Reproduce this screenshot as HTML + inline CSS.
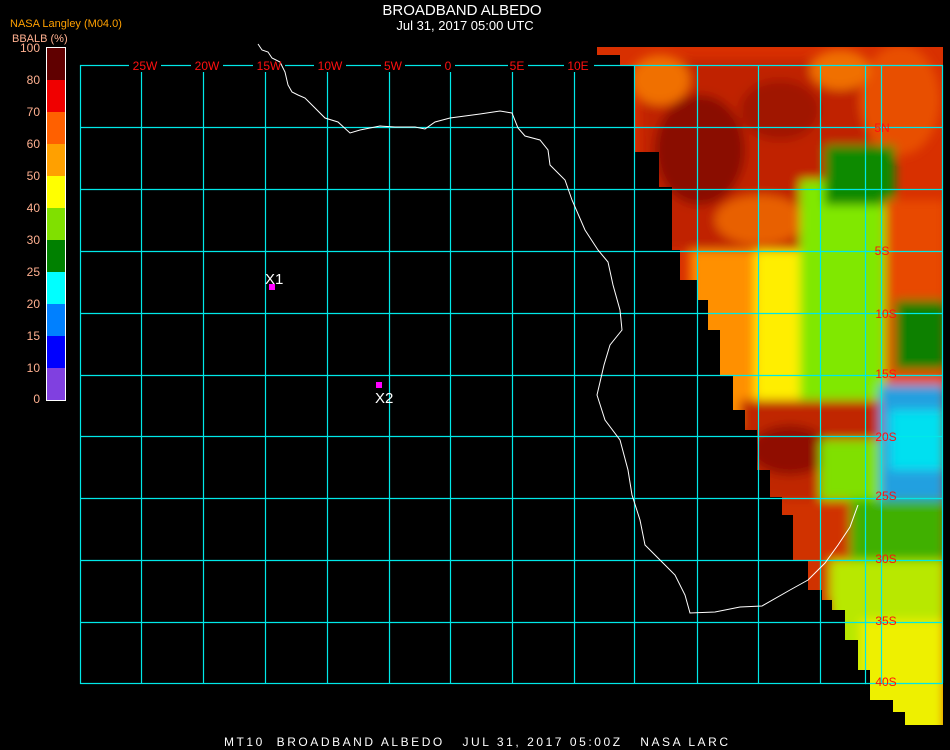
<!DOCTYPE html>
<html><head><meta charset="utf-8"><style>
html,body{margin:0;padding:0;background:#000;width:950px;height:750px;overflow:hidden}
svg{display:block}
text{font-family:"Liberation Sans",sans-serif;white-space:pre}
</style></head><body>
<svg width="950" height="750" viewBox="0 0 950 750">
<defs>
<clipPath id="dc"><polygon points="597,47 943,47 943,725 905,725 905,712 893,712 893,700 870,700 870,670 858,670 858,640 845,640 845,610 832,610 832,600 822,600 822,590 808,590 808,560 793,560 793,515 782,515 782,497 770,497 770,470 757,470 757,430 745,430 745,410 733,410 733,375 720,375 720,330 708,330 708,300 697,300 697,280 680,280 680,250 672,250 672,187 659,187 659,152 635,152 635,65 620,65 620,55 597,55"/></clipPath>
<filter id="bl"><feGaussianBlur stdDeviation="5"/></filter>
</defs>
<rect width="950" height="750" fill="#000"/>
<g clip-path="url(#dc)">
<rect x="590" y="40" width="360" height="710" fill="#d83000"/>
<g filter="url(#bl)">
<rect x="640" y="60" width="230" height="190" fill="#c02000"/>
<ellipse cx="700" cy="150" rx="45" ry="55" fill="#8a1000"/>
<ellipse cx="660" cy="80" rx="30" ry="25" fill="#f07000"/>
<ellipse cx="780" cy="110" rx="40" ry="30" fill="#a01800"/>
<ellipse cx="760" cy="220" rx="45" ry="25" fill="#e86000"/>
<ellipse cx="900" cy="100" rx="40" ry="55" fill="#e85000"/>
<ellipse cx="840" cy="70" rx="30" ry="20" fill="#f07000"/>
<rect x="690" y="250" width="70" height="180" fill="#ff9000"/>
<rect x="755" y="250" width="60" height="160" fill="#ffee00"/>
<rect x="800" y="180" width="85" height="230" fill="#80e800"/>
<rect x="825" y="145" width="70" height="60" fill="#108a00"/>
<rect x="885" y="200" width="60" height="200" fill="#e84a00"/>
<rect x="895" y="300" width="50" height="70" fill="#108000"/>
<rect x="740" y="400" width="140" height="100" fill="#c02800"/>
<ellipse cx="790" cy="450" rx="40" ry="25" fill="#901000"/>
<rect x="820" y="440" width="60" height="60" fill="#80e000"/>
<rect x="880" y="385" width="65" height="120" fill="#20a0e0"/>
<rect x="890" y="410" width="55" height="60" fill="#00e0f0"/>
<rect x="780" y="500" width="80" height="100" fill="#d03000"/>
<rect x="850" y="500" width="95" height="60" fill="#40b000"/>
<rect x="830" y="560" width="115" height="180" fill="#b8e800"/>
<rect x="860" y="620" width="85" height="120" fill="#eef000"/>
</g>
</g>
<g stroke="#00e8e8" stroke-width="1.2" fill="none">
<rect x="80.5" y="65.5" width="785" height="618"/>
<path d="M141.5 65V683M203.5 65V683M265.5 65V683M327.5 65V683M389.5 65V683M450.5 65V683M512.5 65V683M574.5 65V683M634.5 65V683M697.5 65V683M758.5 65V683M820.5 65V683M881.5 65V683"/>
<path d="M80 127.5H943M80 189.5H943M80 251.5H943M80 313.5H943M80 375.5H943M80 436.5H943M80 498.5H943M80 560.5H943M80 622.5H943M865 65.5H943M865 683.5H943M942.5 65V683"/>
</g>
<g fill="#000">
<rect x="129" y="60" width="32" height="12"/><rect x="191" y="60" width="32" height="12"/><rect x="253" y="60" width="32" height="12"/><rect x="314" y="60" width="32" height="12"/><rect x="381" y="60" width="24" height="12"/><rect x="441" y="60" width="14" height="12"/><rect x="508" y="60" width="20" height="12"/><rect x="564" y="60" width="30" height="12"/>
</g>
<polyline fill="none" stroke="#fff" stroke-width="1" points="258,44 262,50 268,52 272,58 280,62 285,72 288,85 292,92 298,95 305,98 315,108 325,118 338,122 350,133 360,130 370,128 380,126 395,127 415,127 425,129 435,122 450,118 465,116 480,114 500,111 512,113 518,128 525,136 540,140 548,150 550,165 565,180 572,200 585,230 598,250 608,262 613,285 620,310 622,330 610,345 604,365 597,395 605,420 620,440 628,470 632,495 640,520 645,545 660,560 675,575 685,595 690,613 715,612 740,607 762,606 790,590 808,580 825,563 838,545 850,527 858,505"/>
<g fill="#ff1010" font-size="12">
<text x="145" y="70" text-anchor="middle">25W</text>
<text x="207" y="70" text-anchor="middle">20W</text>
<text x="269" y="70" text-anchor="middle">15W</text>
<text x="330" y="70" text-anchor="middle">10W</text>
<text x="393" y="70" text-anchor="middle">5W</text>
<text x="448" y="70" text-anchor="middle">0</text>
<text x="517" y="70" text-anchor="middle">5E</text>
<text x="578" y="70" text-anchor="middle">10E</text>
<text x="882" y="132" text-anchor="middle">5N</text>
<text x="882" y="255" text-anchor="middle">5S</text>
<text x="886" y="318" text-anchor="middle">10S</text>
<text x="886" y="378" text-anchor="middle">15S</text>
<text x="886" y="441" text-anchor="middle">20S</text>
<text x="886" y="500" text-anchor="middle">25S</text>
<text x="886" y="563" text-anchor="middle">30S</text>
<text x="886" y="625" text-anchor="middle">35S</text>
<text x="886" y="686" text-anchor="middle">40S</text>
</g>
<rect x="269" y="284" width="6" height="6" fill="#ff00ff"/>
<rect x="376" y="382" width="6" height="6" fill="#ff00ff"/>
<g fill="#fff" font-size="15">
<text x="265" y="284">X1</text>
<text x="375" y="403">X2</text>
</g>
<text x="462" y="15" fill="#fff" font-size="15" text-anchor="middle">BROADBAND ALBEDO</text>
<text x="465" y="30" fill="#fff" font-size="13" text-anchor="middle">Jul 31, 2017 05:00 UTC</text>
<text x="10" y="27" fill="#ffa000" font-size="11">NASA Langley (M04.0)</text>
<text x="12" y="42" fill="#ffb090" font-size="11">BBALB (%)</text>
<g fill="#ffb090" font-size="12" text-anchor="end">
<text x="40" y="52">100</text><text x="40" y="84">80</text><text x="40" y="116">70</text><text x="40" y="148">60</text><text x="40" y="180">50</text><text x="40" y="212">40</text><text x="40" y="244">30</text><text x="40" y="276">25</text><text x="40" y="308">20</text><text x="40" y="340">15</text><text x="40" y="372">10</text><text x="40" y="403">0</text>
</g>
<g>
<rect x="47" y="48" width="18" height="32" fill="#600000"/>
<rect x="47" y="80" width="18" height="32" fill="#f00000"/>
<rect x="47" y="112" width="18" height="32" fill="#ff6000"/>
<rect x="47" y="144" width="18" height="32" fill="#ffa000"/>
<rect x="47" y="176" width="18" height="32" fill="#ffff00"/>
<rect x="47" y="208" width="18" height="32" fill="#80e000"/>
<rect x="47" y="240" width="18" height="32" fill="#008000"/>
<rect x="47" y="272" width="18" height="32" fill="#00ffff"/>
<rect x="47" y="304" width="18" height="32" fill="#0080ff"/>
<rect x="47" y="336" width="18" height="32" fill="#0000ff"/>
<rect x="47" y="368" width="18" height="32" fill="#8040e0"/>
<rect x="46.5" y="47.5" width="19" height="353" fill="none" stroke="#fff" stroke-width="1"/>
</g>
<text x="224" y="746" fill="#fff" font-size="12" font-family="Liberation Mono" xml:space="preserve" textLength="504" lengthAdjust="spacing">MT10  BROADBAND ALBEDO   JUL 31, 2017 05:00Z   NASA LARC</text>
</svg>
</body></html>
